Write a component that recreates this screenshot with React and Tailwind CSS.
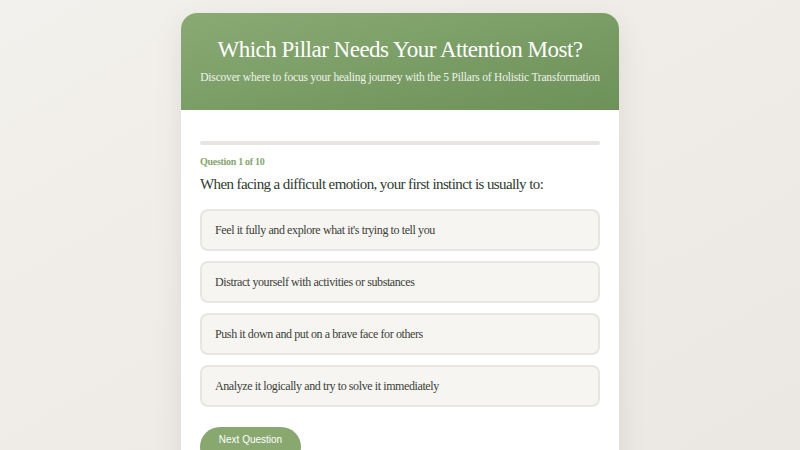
export default function App() {
  const options = [
    "Feel it fully and explore what it's trying to tell you",
    'Distract yourself with activities or substances',
    'Push it down and put on a brave face for others',
    'Analyze it logically and try to solve it immediately',
  ];

  return (
    <div className="h-[450px] overflow-hidden bg-gradient-to-br from-[#f3f1ed] to-[#ebe7e2] flex justify-center pt-[13px] font-['Liberation_Serif',serif]">
      <div className="w-[438px] bg-white rounded-2xl shadow-[0_8px_30px_rgba(0,0,0,0.08)] overflow-hidden self-start">
        <div className="bg-gradient-to-br from-[#8aaa74] to-[#6c9159] px-4 pt-[23px] pb-[25px] text-center text-white">
          <h1 className="text-[23px] leading-[28px] tracking-[-0.5px] font-normal whitespace-nowrap">
            Which Pillar Needs Your Attention Most?
          </h1>
          <p className="mt-[5px] text-[11.5px] leading-[16px] tracking-[-0.2px] text-[#eef3ea] whitespace-nowrap">
            Discover where to focus your healing journey with the 5 Pillars of Holistic Transformation
          </p>
        </div>
        <div className="px-[19px] pt-[31px] pb-6">
          <div className="h-1 rounded-full bg-[#e8e5e1]" />
          <div className="mt-[10px] text-[10px] leading-[14px] tracking-[-0.3px] font-bold text-[#86a56e]">
            Question 1 of 10
          </div>
          <div className="mt-[5px] text-[15px] leading-[20px] tracking-[-0.6px] text-[#2f3a2f]">
            When facing a difficult emotion, your first instinct is usually to:
          </div>
          <div className="mt-[15px] flex flex-col gap-[10px]">
            {options.map((o) => (
              <div
                key={o}
                className="h-[42px] flex items-center px-[13px] bg-[#f7f5f1] border-2 border-[#e9e6e1] rounded-lg text-[12px] tracking-[-0.4px] text-[#3a3f38]"
              >
                {o}
              </div>
            ))}
          </div>
          <button className="mt-[20px] h-[40px] w-[101px] pt-[5px] flex justify-center items-start rounded-full bg-[#88a870] text-white text-[10px] leading-[15px] font-['Liberation_Sans',sans-serif]">
            Next Question
          </button>
        </div>
      </div>
    </div>
  );
}
